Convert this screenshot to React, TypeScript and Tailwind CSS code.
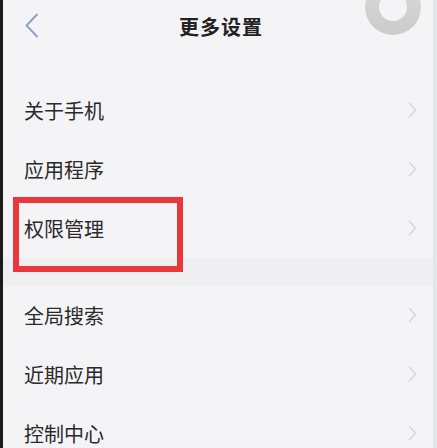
const groups = [
  ["关于手机", "应用程序", "权限管理"],
  ["全局搜索", "近期应用", "控制中心"],
];

const font = { fontFamily: '"Noto Sans CJK SC", "Noto Sans", sans-serif' };

const Row = ({ label }: { label: string }) => (
  <div className="flex h-[59px] shrink-0 items-center justify-between pl-[21px] pr-[16px]">
    <span className="text-[20px] leading-none text-[#2a2a2a]">{label}</span>
    <svg width="9" height="16" viewBox="0 0 9 16" className="mt-[-2px]">
      <polyline points="1.5,1.5 7.5,8 1.5,14.5" fill="none" stroke="#d5d6db" strokeWidth="1.6" strokeLinecap="round" strokeLinejoin="round" />
    </svg>
  </div>
);

export default function App() {
  return (
    <div className="relative flex h-[448px] w-[437px] overflow-hidden bg-[#f4f4f7]" style={font}>
      {/* 左边黑边 */}
      <div className="w-[3px] shrink-0 bg-[#1c1c1c]" />

      <div className="flex flex-1 flex-col border-r-[4px] border-[#e3e5ea]">
        {/* 标题栏 */}
        <div className="relative flex h-[52px] shrink-0 items-center justify-center pl-[6px]">
          <svg
            width="16"
            height="25"
            viewBox="0 0 16 25"
            className="absolute left-[21px] top-[13px]"
          >
            <polyline points="13,1.5 2.5,12.5 13,23.5" fill="none" stroke="#8ea3c4" strokeWidth="2" strokeLinecap="round" strokeLinejoin="round" />
          </svg>
          <span className="pt-[2px] text-[20px] font-bold tracking-[1px] text-[#222]">更多设置</span>
        </div>

        <div className="h-[29px] shrink-0" />

        {groups.map((items, gi) => (
          <div key={gi} className="flex flex-col">
            {gi > 0 && <div className="h-[28px] shrink-0 bg-[#efeff2]" />}
            {items.map((label) => (
              <Row key={label} label={label} />
            ))}
          </div>
        ))}
      </div>

      {/* 悬浮球 */}
      <div className="absolute left-[365px] top-[-21px] flex h-[56px] w-[56px] items-center justify-center rounded-full bg-gradient-to-b from-[#dadada] to-[#cbcbcb] blur-[0.5px]">
        <div className="h-[28px] w-[28px] rounded-full bg-[#f4f4f6]" />
      </div>

      {/* 红框标注 */}
      <div className="absolute left-[13px] top-[197px] h-[75px] w-[170px] border-[6px] border-[#e8383c]" />
    </div>
  );
}
